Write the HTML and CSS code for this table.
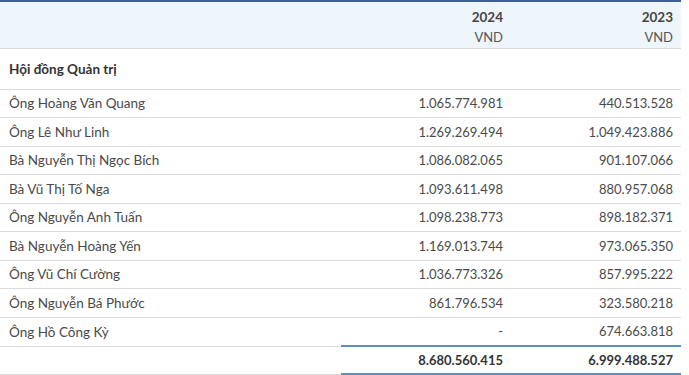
FILE: index.html
```html
<!DOCTYPE html>
<html lang="vi">
<head>
<meta charset="utf-8">
<link rel="stylesheet" href="styles.css">
</head>
<body>
<table class="fin">
  <colgroup>
    <col class="c-label">
    <col class="c-num">
    <col class="c-num">
  </colgroup>
  <thead>
    <tr>
      <th class="h-label"></th>
      <th class="h-num"><span class="yr">2024</span><span class="cur">VND</span></th>
      <th class="h-num"><span class="yr">2023</span><span class="cur">VND</span></th>
    </tr>
  </thead>
  <tbody>
    <tr class="section"><td>Hội đồng Quản trị</td><td></td><td></td></tr>
    <tr><td>Ông Hoàng Văn Quang</td><td class="num">1.065.774.981</td><td class="num">440.513.528</td></tr>
    <tr><td>Ông Lê Như Linh</td><td class="num">1.269.269.494</td><td class="num">1.049.423.886</td></tr>
    <tr><td>Bà Nguyễn Thị Ngọc Bích</td><td class="num">1.086.082.065</td><td class="num">901.107.066</td></tr>
    <tr><td>Bà Vũ Thị Tố Nga</td><td class="num">1.093.611.498</td><td class="num">880.957.068</td></tr>
    <tr><td>Ông Nguyễn Anh Tuấn</td><td class="num">1.098.238.773</td><td class="num">898.182.371</td></tr>
    <tr><td>Bà Nguyễn Hoàng Yến</td><td class="num">1.169.013.744</td><td class="num">973.065.350</td></tr>
    <tr><td>Ông Vũ Chí Cường</td><td class="num">1.036.773.326</td><td class="num">857.995.222</td></tr>
    <tr><td>Ông Nguyễn Bá Phước</td><td class="num">861.796.534</td><td class="num">323.580.218</td></tr>
    <tr><td>Ông Hồ Công Kỳ</td><td class="num">-</td><td class="num">674.663.818</td></tr>
    <tr class="total"><td></td><td class="num">8.680.560.415</td><td class="num">6.999.488.527</td></tr>
  </tbody>
</table>
</body>
</html>
```

FILE: styles.css
```css
html, body {
  margin: 0;
  padding: 0;
  background: #ffffff;
}
body {
  font-family: "Lato", "Noto Sans", sans-serif;
  font-size: 13px;
  color: #4a4a4a;
}
.fin {
  width: 681px;
  border-collapse: collapse;
  table-layout: fixed;
}
.c-label { width: 341px; }
.c-num { width: 170px; }
.fin thead tr {
  background: #eef6fc;
  border-top: 2px solid #3f5f92;
}
.fin th {
  height: 42px;
  padding: 4px 8px 0 8px;
  vertical-align: middle;
  border-bottom: 1px solid #d6d8dc;
}
.h-num {
  text-align: right;
}
.yr {
  display: block;
  font-weight: 700;
  font-size: 13.5px;
  line-height: 20px;
  color: #444;
}
.cur {
  display: block;
  font-weight: 400;
  font-size: 13px;
  line-height: 20px;
  color: #555;
}
.fin td {
  height: 27.5px;
  padding: 0 8px 0 9px;
  border-bottom: 1px solid #dcdcdc;
  white-space: nowrap;
  font-size: 13.5px;
  line-height: 16px;
}
.fin td.num {
  text-align: right;
  padding-right: 8px;
  font-size: 13px;
}
.section td {
  height: 39.5px;
  font-weight: 700;
  color: #333;
}
.total td {
  font-weight: 700;
  color: #333;
  height: 26px;
}
.total td.num {
  border-top: 2px solid #5b8fbd;
  border-bottom: 2px solid #5b8fbd;
}
```
